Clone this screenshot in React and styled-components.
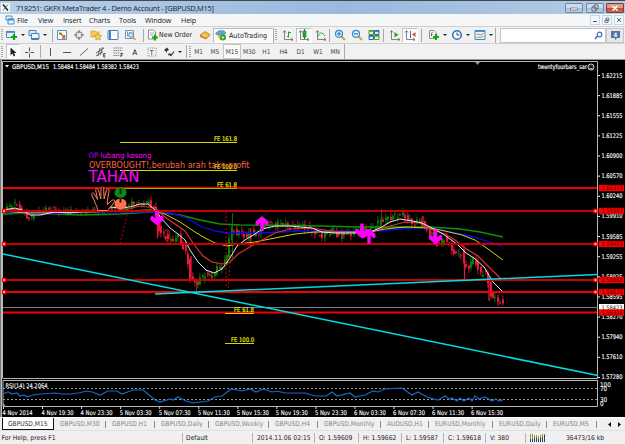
import React from 'react';
import styled, { createGlobalStyle } from 'styled-components';

const GlobalStyle = createGlobalStyle`
  * { box-sizing: border-box; }
  body {
    margin: 0;
    overflow: hidden;
    background: #f0f0f0;
    font-family: "DejaVu Sans Condensed", "DejaVu Sans", sans-serif;
    font-size: 6.7px;
    color: #222;
  }
`

const Window = styled.div`
  width: 625px;
  height: 444px;
  display: flex;
  flex-direction: column;
  background: #f0f0f0;
  white-space: nowrap;
  overflow: hidden;
`

const TitleBar = styled.header`
  height: 14px;
  flex: none;
  display: flex;
  align-items: center;
  border-top: 1px solid #45484f;
  background: linear-gradient(90deg, #b9cfe8 0, #a3c0e0 38%, #9ab9dc 55%, #b4cbe5 100%);
  font-family: "Open Sans", "Noto Sans", sans-serif;
  font-size: 7.5px;
  color: #1d2430;
`

const TitleText = styled.span`
  flex: 1;
  margin-left: 5px;
  letter-spacing: -0.28px;
`

const WindowButton = styled.span`
  width: 18px;
  height: 10px;
  margin-right: ${props => props.$gap}px;
  border: 1px solid ${props => props.$close ? '#7c3a35' : '#6e88a6'};
  border-radius: 1px;
  display: flex;
  align-items: center;
  justify-content: center;
  background: ${props => props.$close
    ? 'linear-gradient(#df9b8e 45%, #c04c36 50%, #cf6a50)'
    : 'linear-gradient(#cddcec 45%, #a5bed9 50%, #b9cfe5)'};
`

const MenuBar = styled.nav`
  height: 12px;
  flex: none;
  display: flex;
  align-items: center;
  padding-left: 3px;
  background: #f5f6f7;
  font-family: "Open Sans", "Noto Sans", sans-serif;
  font-size: 7.2px;
  letter-spacing: -0.15px;
`

const MenuItem = styled.span`
  width: ${props => props.$w}px;
`

const MdiButtons = styled.div`
  margin-left: auto;
  margin-right: 1px;
  display: flex;
  gap: 2px;
`

const MdiButton = styled.span`
  width: 10px;
  height: 10px;
  border: 1px solid #c3d6ea;
  background: #f2f7fc;
  display: flex;
  align-items: center;
  justify-content: center;
`

const Toolbar = styled.div`
  height: ${props => props.$h}px;
  flex: none;
  display: flex;
  align-items: center;
  padding-left: 1px;
  border-top: 1px solid #d0d0d0;
  background: #f1f1f1;
`

const Grip = styled.span`
  width: 2px;
  height: 12px;
  flex: none;
  margin-right: ${props => props.$gap}px;
  background: repeating-linear-gradient(#aaa 0 1px, #eee 1px 2px);
`

const Slot = styled.span`
  width: ${props => props.$w || 17}px;
  height: 15px;
  flex: none;
  display: flex;
  align-items: center;
  justify-content: center;
`

const Pressed = styled(Slot)`
  border: 1px solid #c2c2c2;
  border-right-color: #fff;
  border-bottom-color: #fff;
  background: #fafafa;
`

const Separator = styled.span`
  width: 1px;
  height: ${props => props.$h || 13}px;
  flex: none;
  margin: 0 ${props => props.$r || 0}px 0 ${props => props.$l || 0}px;
  background: #a9a9a9;
`

const Drop = styled.span`
  width: ${props => props.$w || 5}px;
  flex: none;
  display: flex;
  justify-content: center;
  &::after {
    content: '';
    border: 2px solid transparent;
    border-top-color: #222;
    border-bottom: 0;
  }
`

const ToolLabel = styled.span`
  width: ${props => props.$w}px;
  flex: none;
  font-size: 6.9px;
`

const AutoButton = styled.span`
  width: 60px;
  height: 15px;
  flex: none;
  display: flex;
  align-items: center;
  gap: 2px;
  padding-left: 1px;
  font-size: 7.1px;
  border: 1px solid #bbb;
  border-right-color: #fff;
  border-bottom-color: #fff;
  background: #fafafa;
`

const Search = styled.span`
  width: 106px;
  height: 15px;
  margin-left: auto;
  padding-right: 2px;
  display: flex;
  align-items: center;
  justify-content: flex-end;
  border: 1px solid #c5c5c5;
  background: #fff;
`

const ChatButton = styled.span`
  width: 18px;
  height: 15px;
  margin-right: 1px;
  display: flex;
  align-items: center;
  justify-content: center;
  border: 1px solid #c5c5c5;
  background: #e8e8e8;
`

const Period = styled.span`
  width: ${props => props.$w}px;
  height: 15px;
  flex: none;
  display: flex;
  align-items: center;
  justify-content: center;
  font-size: 6.5px;
  color: #444;
  border: 1px solid ${props => props.$on ? '#c6c6c6' : 'transparent'};
  background: ${props => props.$on ? '#fafafa' : 'none'};
`

const ChartArea = styled.main`
  height: 358px;
  flex: none;
  background: #000;
  svg { display: block; }
`

const TabBar = styled.div`
  height: 13px;
  flex: none;
  display: flex;
  align-items: center;
  background: #f0f0f0;
  border-top: 1px solid #fff;
  padding-left: 2px;
  font-size: 6.6px;
  color: #858585;
`

const Tab = styled.span`
  width: ${props => props.$w}px;
  height: 12px;
  flex: none;
  display: flex;
  align-items: center;
  padding-left: ${props => props.$on ? 5 : 6}px;
  position: relative;
  color: ${props => props.$on ? '#333' : 'inherit'};
  background: ${props => props.$on ? '#fff' : 'none'};
  border: ${props => props.$on ? '1px solid #111' : '0'};
  border-top: 0;
  &::after {
    content: '';
    display: ${props => props.$on ? 'none' : 'block'};
    position: absolute;
    right: 0;
    width: 1px;
    height: 7px;
    background: #888;
  }
`

const TabArrows = styled.span`
  margin-left: auto;
  margin-right: 3px;
  display: flex;
`

const StatusBar = styled.footer`
  flex: 1;
  display: flex;
  align-items: center;
  border-top: 1px solid #e1e1e1;
  background: #f0f0f0;
`

const Status = styled.span`
  width: ${props => props.$w}px;
  height: 10px;
  flex: none;
  display: flex;
  align-items: center;
  padding-left: ${props => props.$pad || 4}px;
  border-right: ${props => props.$noLine ? '0' : '1px solid #b5b5b5'};
`

const Svg = ({ w = 12, h = 12, children }) => (
  <svg width={w} height={h} viewBox={`0 0 ${w} ${h}`} fill="none">{children}</svg>
)

const Plus = ({ x, y }) => (
  <path d={`M${x} ${y - 3}v6M${x - 3} ${y}h6`} stroke="#13a81c" strokeWidth="2.2" />
)

const Axes = () => (
  <path d="M2.500 2v8.500h8M1 3.500l1.500-2 1.500 2M9 9l2 1.500L9 12" stroke="#666" strokeWidth=".8" />
)

const icons = {
  logo: <Svg w={9} h={9}><rect width="9" height="9" fill="#f4f6f8" /><path d="M2 1.500l5 6" stroke="#222" strokeWidth="1.500" /><path d="M7 1.500l-5 6" stroke="#444" strokeWidth=".8" /></Svg>,
  mdi: <Svg w={10} h={10}><path d="M1 1h6v4H1zM3 4h6v5H3z" fill="#e9f4fd" stroke="#4a8fc7" /><path d="M3 4.500h6" stroke="#4a8fc7" strokeWidth="1.500" /></Svg>,
  newChart: <Svg><path d="M.5 2.500h8v6h-8z" fill="#e4f1fb" stroke="#5b8bb4" /><path d="M.5 3h8" stroke="#3f86c4" strokeWidth="1.600" /><Plus x={8} y={8} /></Svg>,
  profiles: <Svg><path d="M1 1.500h7v5H1z" fill="#d9ebfa" stroke="#4686bd" /><path d="M3.500 4.500h7.500v5.500H3.500z" fill="#eaf4fc" stroke="#4686bd" /><path d="M3.500 10h7" stroke="#2869a5" strokeWidth="1.500" /></Svg>,
  market: <Svg><path d="M1.500 1.500h9v9h-9z" fill="#fff" stroke="#4e94c8" /><path d="M3 3.500h2.500v2H3z" fill="#25a932" /><path d="M4.500 4.500l4 4M8.500 6v3H6" stroke="#e75928" strokeWidth="1.500" /></Svg>,
  target: <Svg><circle cx="6" cy="6" r="3.300" stroke="#666" strokeWidth=".9" /><path d="M6 1v3.500M6 7.500V11M1 6h3.500M7.500 6H11" stroke="#666" strokeWidth=".9" /></Svg>,
  star: <Svg><path d="M1 2h4l1 1h3v5H1z" fill="#f3cc5b" stroke="#c49b31" strokeWidth=".7" /><path d="M8 4l1.200 2.300 2.500.3-1.800 1.800.4 2.600L8 9.800l-2.300 1.200.4-2.600-1.800-1.800 2.500-.3z" fill="#f7d44a" stroke="#b88a1a" strokeWidth=".6" /></Svg>,
  terminal: <Svg><rect x="1" y="1.500" width="10" height="9" rx="1" fill="#fff" stroke="#3f7cb8" /><path d="M2 2h2v8H2z" fill="#3f84c6" /><path d="M5.500 4h4M5.500 6h4" stroke="#ccdfef" strokeWidth=".6" /></Svg>,
  tester: <Svg><path d="M1.500 1.500h8v8h-8z" fill="#eef6fc" stroke="#7698b5" /><path d="M3.500 2.500v5M5.500 3v4" stroke="#5b85aa" strokeWidth=".8" /><circle cx="7" cy="6" r="2.300" fill="#d7edfb" stroke="#4a8ab8" /><path d="M9 8l2.500 3" stroke="#d4a43a" strokeWidth="1.600" /></Svg>,
  order: <Svg><path d="M1.500 1h5l2 2v7h-7z" fill="#fff" stroke="#777" strokeWidth=".8" /><path d="M3 4h4M3 6h3" stroke="#888" strokeWidth=".7" /><Plus x={8} y={8.500} /></Svg>,
  gold: <Svg><path d="M1 6l5-3.500L11 5.500 7.500 9.500z" fill="#f3bd3e" stroke="#a8741b" strokeWidth=".7" /><path d="M1 6v2l6 2.500 4-4V5.500L7.500 9z" fill="#cf8d22" /><path d="M3.500 5.500l4 1.800" stroke="#fbe6a5" /></Svg>,
  auto: <Svg><path d="M1 5h10l-3 6H5z" fill="#edbd38" /><path d="M.5 5C2 1 9 0 11 4c-3 2-7 2-10.500 1z" fill="#5da5d7" stroke="#3b7fae" strokeWidth=".6" /><circle cx="8" cy="8.500" r="3" fill="#25a930" /><path d="M7.200 7l2.300 1.500L7.200 10z" fill="#fff" /></Svg>,
  bars: <Svg><Axes /><path d="M6.500 2.500v6M6.500 7.500H5M6.500 3.500H9" stroke="#249a35" /></Svg>,
  candle: <Svg><Axes /><path d="M6.500 0v10" stroke="#16862a" /><rect x="5" y="2" width="3" height="6" fill="#24b139" stroke="#16862a" strokeWidth=".7" /></Svg>,
  line: <Svg><Axes /><path d="M3 7.500C5 2.500 7 3 10 7" stroke="#35a345" /></Svg>,
  zoomIn: <Svg><path d="M7.500 7.500l3.500 3.500" stroke="#d3a72f" strokeWidth="2.200" /><circle cx="5" cy="4.800" r="3.500" fill="#dff1fc" stroke="#348bc9" strokeWidth="1.200" /><path d="M3 4.800h4M5 2.800v4" stroke="#2f7fc0" strokeWidth="1.200" /></Svg>,
  zoomOut: <Svg><path d="M7.500 7.500l3.500 3.500" stroke="#d3a72f" strokeWidth="2.200" /><circle cx="5" cy="4.800" r="3.500" fill="#dff1fc" stroke="#348bc9" strokeWidth="1.200" /><path d="M3 4.800h4" stroke="#2f7fc0" strokeWidth="1.200" /></Svg>,
  tiles: <Svg><path d="M1 1.500h4.500v4H1zM6.500 6.500H11v4H6.500z" fill="#e4f3dc" stroke="#4a9c2d" /><path d="M6.500 1.500H11v4H6.500zM1 6.500h4.500v4H1z" fill="#dbe8fa" stroke="#2b67b5" /><path d="M1 2h4.500M6.500 7H11" stroke="#4a9c2d" strokeWidth="1.500" /><path d="M6.500 2H11M1 7h4.500" stroke="#2b67b5" strokeWidth="1.500" /></Svg>,
  scroll: <Svg><Axes /><path d="M5.500 3v5.500l4-2.700z" fill="#27a43a" /></Svg>,
  shift: <Svg><Axes /><path d="M6.500 2v7" stroke="#36729f" /><path d="M11.500 3L8 5.500 11.500 8z" fill="#c94e2d" /></Svg>,
  indicators: <Svg><path d="M1.500 1.500h4.500l2 2v6H1.500z" fill="#f6f6f6" stroke="#777" strokeWidth=".8" /><path d="M5 3.500c-1-.5-1.500 0-1.500 1v3M2.700 5.500h2" stroke="#555" strokeWidth=".7" /><Plus x={8} y={8} /></Svg>,
  clock: <Svg><circle cx="6" cy="6" r="4.300" fill="#f7fbff" stroke="#2b76c1" strokeWidth="1.600" /><path d="M6 3.500V6h2.500" stroke="#333" strokeWidth=".9" /></Svg>,
  template: <Svg><path d="M1 1.500h10v9H1z" fill="#edf5fc" stroke="#4d87b7" /><path d="M1 2h10" stroke="#3e87c5" strokeWidth="1.800" /><path d="M2.500 6l2-1 2 1 3-1.500" stroke="#c25336" strokeWidth=".8" /><path d="M2.500 9l2-1 2 .5 3-1" stroke="#2b9b40" strokeWidth=".8" /></Svg>,
  cursor: <Svg><path d="M3.500 1.500v8l2-2 1.200 3 1.500-.7L7 7h2.500z" fill="#222" /></Svg>,
  cross: <Svg><path d="M5.500 1.500v4M5.500 7.500v4M1 6.500h3.500M6.500 6.500H10" stroke="#555" /></Svg>,
  vline: <Svg><path d="M6.500 2v8" stroke="#555" /></Svg>,
  hline: <Svg><path d="M2 6.500h8" stroke="#555" /></Svg>,
  trend: <Svg><path d="M2 9.500l8-7" stroke="#555" strokeWidth=".9" /></Svg>,
  channel: <Svg><path d="M1 7l8-5M1 10l7-4.500M3 10l2-8M5.500 9l2-8" stroke="#444" strokeWidth=".8" /><path d="M10.500 7.500H8.700V11h1.800M8.700 9.200h1.500" stroke="#222" strokeWidth=".8" /></Svg>,
  fibo: <Svg><path d="M1.500 2h9M1.500 4.500h9M1.500 7h7M1.500 9.500h6" stroke="#666" strokeWidth=".8" strokeDasharray="1.500 .6" /><path d="M9 11V7.500h2M9 9.200h1.600" stroke="#222" strokeWidth=".8" /></Svg>,
  arrows: <Svg><path d="M1 4l3-2.500L6 4 4 5v2L2.500 5z" fill="#333" /><path d="M6 7.500l2 2 3-4M5 9l3-1" stroke="#333" strokeWidth="1.200" /></Svg>,
}

const MA = {
  green: '3,214 30,213 80,215 120,214 150,212 165,213 180,215 200,220 220,224 240,225 300,225.5 360,227 400,227 430,227 460,229 480,232 503,237',
  blue: '3,212 40,214 90,212 150,212 170,213 185,217 200,226 215,231 228,233 260,233 300,231 380,231 410,228 430,228 450,232 470,236 490,242 503,247',
  yellow: '3,211 25,213 90,212 150,210 165,214 180,222 195,232 205,238 215,243 227,246 237,244 255,242 275,238 295,234 315,232 345,232 370,232 385,229 405,227 430,228 445,231 462,235 475,240 488,249 503,260',
  red: '3,210 15,209 28,212 60,212 100,211 125,210 140,206 155,208 165,217 175,224 185,231 193,243 203,256 212,262 222,264 230,262 238,254 250,247 262,240 275,233 290,229 310,228 340,232 370,232 390,226 405,222 420,223 430,229 445,234 455,240 465,248 478,256 490,268 498,276 503,281',
  white: '3,210 15,208 22,210 30,215 40,215 55,212 70,213 85,211 100,211 110,207 120,208 130,207 140,204 148,204 155,210 162,219 170,228 178,234 185,240 190,250 198,262 206,270 214,273 222,269 230,258 237,246 245,240 255,234 262,229 275,226 290,226 300,227 312,228 322,232 335,233 355,233 370,232 380,228 390,222 400,219 412,221 422,223 430,227 443,234 450,239 458,245 466,253 474,258 484,267 493,282 503,292',
}

// mid price along the chart, bars are interpolated between these
const pricePath = [
  [4, 211], [10, 206], [15, 203], [20, 208], [25, 214], [30, 219], [36, 213], [45, 210], [52, 208], [60, 212],
  [70, 210], [80, 213], [90, 210], [98, 212], [105, 209], [115, 207], [124, 210], [132, 203], [142, 204], [150, 202],
  [156, 212], [160, 233], [166, 236], [172, 242], [178, 235], [182, 244], [187, 255], [191, 279], [197, 284],
  [201, 278], [206, 274], [212, 277], [218, 268], [223, 266], [227, 258], [231, 229], [237, 233], [243, 232],
  [247, 239], [251, 231], [256, 236], [261, 229], [267, 223], [275, 226], [281, 223], [290, 227], [300, 225],
  [310, 229], [317, 234], [323, 236], [328, 233], [334, 229], [339, 237], [344, 233], [352, 234], [360, 229],
  [369, 231], [376, 225], [382, 220], [389, 218], [396, 216], [402, 214], [408, 219], [414, 224], [421, 220],
  [427, 231], [433, 234], [438, 245], [445, 238], [451, 248], [457, 256], [461, 250], [465, 268], [470, 266],
  [475, 257], [480, 275], [486, 271], [490, 293], [495, 299], [500, 301], [503, 305],
]

const midAt = x => {
  for (let i = 1; i < pricePath.length; i++) {
    const [x1, y1] = pricePath[i]
    const [x0, y0] = pricePath[i - 1]
    if (x <= x1) return y0 + (y1 - y0) * (x - x0) / (x1 - x0)
  }
  return 306
}

const candles = []
for (let i = 0; i < 205; i++) {
  const x = 4 + i * 2.440
  const late = x > 150
  const open = midAt(x - 1.500) + Math.sin(i * 2.7) * (late ? 2.200 : 1.500)
  const close = midAt(x + 1.500) + Math.sin(i * 4.3 + 1) * (late ? 2.500 : 1.800)
  const range = late ? 4.500 : 3.500
  candles.push({
    x: Math.round(x),
    open,
    close,
    high: Math.min(open, close) - Math.abs(Math.sin(i * 1.9)) * range,
    low: Math.max(open, close) + Math.abs(Math.cos(i * 2.3)) * range,
  })
}

const scale = [
  '1.62215', '1.61885', '1.61555', '1.61225', '1.60900', '1.60570', '1.60240', '1.59910',
  '1.59585', '1.59255', '1.58925', '1.58595', '1.58270', '1.57940', '1.57610', '1.57280',
]

const levels = [
  { y: 188, label: '1.60373' },
  { y: 211, label: '1.59993', handle: true },
  { y: 244, label: '1.59453', handle: true },
  { y: 280, label: '1.58868', handle: true },
  { y: 292, label: '1.58674', handle: true },
  { y: 312.5, label: '1.58338' },
]

const times = [
  '4 Nov 2014', '4 Nov 19:30', '4 Nov 23:30', '5 Nov 03:30', '5 Nov 07:30', '5 Nov 11:30', '5 Nov 15:30',
  '5 Nov 19:30', '5 Nov 23:30', '6 Nov 03:30', '6 Nov 07:30', '6 Nov 11:30', '6 Nov 15:30',
]

const fibs = [
  { x: 120, y: 142, label: 'FE 161.8' },
  { x: 120, y: 170, label: 'FE 100.0' },
  { x: 120, y: 188, label: 'FE 61.8' },
  { x: 225, y: 313, label: 'FE 61.8' },
  { x: 225, y: 343, label: 'FE 100.0' },
]

const rsi = '3,394 8,392 12,394 17,393 20,396 24,395 27,397 33,395 40,394 55,393 62,394 70,394 78,393 87,391 92,392 100,395 108,391 117,391 122,394 133,390 143,390 148,394 155,400 160,402 170,399 173,400 178,397 186,401 193,403 200,402 208,401 215,397 222,396 231,389 242,391 250,389 256,392 263,389 272,392 277,391 285,393 305,393 315,396 326,396 332,392 337,396 350,393 355,397 365,395 373,391 378,392 385,389 402,388 412,395 418,392 427,397 438,400 445,396 449,399 452,398 457,401 460,398 464,401 469,398 472,401 475,396 479,399 485,397 492,401 496,399 499,401 503,400'

function Arrow({ x, y, up }) {
  return (
    <path
      transform={`translate(${x} ${y}) scale(1 ${up ? -1 : 1})`}
      d="M-1.700-7.500h3.400V.5L5-2.500 6.500-1V2L0 7.500-6.500 2V-1L-5-2.500-1.700.5z"
      fill="#f0f"
    />
  )
}

function Chart() {
  return (
    <svg width="625" height="358" viewBox="0 59 625 358" fontFamily='"DejaVu Sans Condensed", sans-serif' fontSize="6.3">
      <rect x="0" y="59" width="625" height="358" fill="#000" />
      <rect x="0" y="59" width="625" height="1" fill="#999" />
      <rect x="0" y="60" width="1" height="357" fill="#777" />
      <rect x="1" y="60" width="1" height="357" fill="#bbb" />
      <path d="M2.500 378.500V61.500H597.500V378.500M3 378.500H598M3 380.500H598M597.500 380.500V406.500H3V380.500" fill="none" stroke="#b8b8b8" />
      <path d="M475 62h5l-2.500 3z" fill="#8798aa" />

      {/* scale */}
      {scale.map((t, i) => (
        <g key={t} fill="#f5f5f5">
          <rect x="598" y={75 + i * 20.130} width="2" height="1" />
          <text x="601.500" y={77.500 + i * 20.130} textLength="21" lengthAdjust="spacingAndGlyphs" stroke="#fff" strokeWidth=".15">{t}</text>
        </g>
      ))}

      {/* bars and moving averages */}
      <g>
        {candles.map((c, i) => {
          const color = c.close < c.open ? '#008a00' : '#f01842'
          return (
            <g key={i} fill={color}>
              <rect x={c.x + .5} y={c.high} width=".8" height={c.low - c.high} />
              <rect x={c.x} y={Math.min(c.open, c.close)} width="1.900" height={Math.max(.8, Math.abs(c.open - c.close))} />
            </g>
          )
        })}
        <path d="M232.500 213v45M381.500 209v14M196.500 280v13" stroke="#007000" />
        <path d="M157.500 216v22M191 256v25M250.500 228v18M423 216v12M464.500 251v29M489 277v24" stroke="#e0183c" strokeWidth="1.300" />
      </g>
      <g fill="none" strokeWidth="1">
        <polyline points={MA.green} stroke="#0a920a" strokeWidth="1.300" />
        <polyline points={MA.blue} stroke="#0909ef" strokeWidth="1.300" />
        <polyline points={MA.yellow} stroke="#d2d210" />
        <polyline points={MA.red} stroke="#e2302c" strokeWidth="1.200" />
        <polyline points={MA.white} stroke="#e8e8e8" />
      </g>
      <path d="M130 203L120 244M226 212v75M231 250l-3 42" stroke="#c00014" strokeDasharray="2 2" fill="none" />
      <ellipse cx="167" cy="235" rx="3" ry="5.500" fill="none" stroke="#b01808" />

      {/* levels */}
      <path d="M3 307.500H598" stroke="#777f88" />
      {levels.map(l => (
        <g key={l.label}>
          <rect x="3" y={l.y - 1} width="594" height="2" fill={l.y === 211 || l.y === 244 || l.y === 280 ? '#c90000' : '#f20000'} />
          {l.handle && <path d={`M2.500 ${l.y - 1.500}h3v3h-3zM594 ${l.y - 1.500}h3v3h-3z`} fill="#fff" stroke="#f00" strokeWidth="1.300" />}
        </g>
      ))}
      <path d="M3 254L598 375.500M155 294L598 274.500" stroke="#00dce4" strokeWidth="1.500" />
      <rect x="599" y="304" width="25" height="6.500" fill="#fff" />
      <text x="601.500" y="309.500" textLength="21" lengthAdjust="spacingAndGlyphs" fill="#111">1.58423</text>
      {levels.map(l => (
        <g key={l.label}>
          <rect x="599" y={l.y - 3.200} width="25" height="6.400" fill="#fa0000" />
          <text x="601.500" y={l.y + 2.300} textLength="21" lengthAdjust="spacingAndGlyphs" fill="#500">{l.label}</text>
        </g>
      ))}

      {/* fibo expansions */}
      {fibs.map((f, i) => (
        <g key={i}>
          <rect x={f.x} y={f.y} width={f.x === 120 ? 117 : 29} height="1" fill={f.y === 188 ? '#98b000' : '#d9d900'} />
          <text
            x={f.x === 120 ? 237 : 254}
            y={f.y - 1.200}
            textAnchor="end"
            textLength={f.label.length === 8 ? 23 : 20}
            lengthAdjust="spacingAndGlyphs"
            fill="#f4f400"
            stroke="#f4f400"
            strokeWidth=".15"
          >
            {f.label}
          </text>
        </g>
      ))}

      {/* signals */}
      <text x="88.500" y="158.300" fontSize="7.500" fill="#f0f" textLength="63" lengthAdjust="spacingAndGlyphs">
        <tspan fill="#b000ff">OP</tspan> lubang kosong
      </text>
      <text x="89" y="168.300" fontSize="8.800" fill="#ff6545" textLength="160.500" lengthAdjust="spacingAndGlyphs">OVERBOUGHT!,berubah arah take profit</text>
      <text x="88.500" y="182" fontSize="15.800" fill="#f0f" textLength="51" lengthAdjust="spacingAndGlyphs">TAHAN</text>
      <path
        d="M97.500 210.500c0-4-2-6-2.700-8.500L91.800 195c-.6-2 1.600-2.800 2.500-1l3.400 5.500-2-9c-.3-2 2.200-2.500 2.800-.5l2.300 9 .2-10.500c0-2 2.700-2 2.700 0l.4 10.500 2.400-9c.6-1.900 3-1.200 2.600.7L107.500 200l-.3 4.500 4.800-4.200c1.700-1.200 3.600.2 2.400 1.800l-6.900 8.400z"
        fill="#000"
        stroke="#ff8062"
        strokeWidth="1"
      />
      <ellipse cx="120.500" cy="192.500" rx="6" ry="5.300" fill="#078b12" />
      <ellipse cx="120.500" cy="204" rx="6" ry="5.500" fill="#ff704d" />
      <path d="M120.500 189v5M120.500 198.500v4" stroke="#111" strokeWidth="1.800" />
      <Arrow x={157} y={218} />
      <Arrow x={262} y={223.500} up />
      <Arrow x={362} y={231} />
      <Arrow x={369} y={236} up />
      <Arrow x={435.500} y={237} />

      {/* headings */}
      <path d="M5 65h4l-2 2.500z" fill="#fff" />
      <g fill="#fff" stroke="#fff" strokeWidth=".15">
        <text x="12" y="68.500" textLength="37" lengthAdjust="spacingAndGlyphs">GBPUSD,M15</text>
        <text x="53" y="68.500" textLength="86" lengthAdjust="spacingAndGlyphs">1.58484 1.58484 1.58382 1.58423</text>
        <text x="538" y="69" textLength="49" lengthAdjust="spacingAndGlyphs">twentyfourbars_sar</text>
      </g>
      <g fill="none" stroke="#fff" strokeWidth=".8">
        <circle cx="591" cy="67" r="3" />
        <path d="M589.300 68q1.700 2 3.400 0M589.500 66h.8M591.700 66h.8" />
      </g>

      {/* rsi */}
      <path d="M3 388.500H597M3 399.500H597" stroke="#999" strokeDasharray="2 2" />
      <polyline points={rsi} fill="none" stroke="#1769c6" strokeWidth="1.200" />
      <path d="M3 403v3.500h3z" fill="#9aa8b5" />
      <g fill="#fff" stroke="#fff" strokeWidth=".1">
        <text x="5.500" y="388" textLength="42" lengthAdjust="spacingAndGlyphs">RSI(14) 24.2064</text>
        <text x="600" y="387">100</text>
        <text x="600" y="391">70</text>
        <text x="600" y="401.500">30</text>
        <text x="600" y="405.500">0</text>
        {times.map((t, i) => (
          <text key={t} x={2.500 + i * 39.050} y="414.800" textLength={i ? 32 : 30} lengthAdjust="spacingAndGlyphs">{t}</text>
        ))}
      </g>
      {times.map((t, i) => <rect key={t} x={3 + i * 39.050} y="407" width="1" height="2" fill="#ddd" />)}
    </svg>
  )
}

const menus = [['File', 21], ['View', 25], ['Insert', 26], ['Charts', 30], ['Tools', 26], ['Window', 36], ['Help', 20]]
const tabs = [
  ['GBPUSD,M15', 52], ['GBPUSD,M30', 52], ['GBPUSD,H1', 49], ['GBPUSD,Daily', 54], ['GBPUSD,Weekly', 60],
  ['GBPUSD,H4', 49], ['GBPUSD,Monthly', 63], ['AUDUSD,H1', 48], ['EURUSD,Monthly', 64], ['EURUSD,Daily', 54], ['EURUSD,M5', 50],
]

export default function App() {
  return (
    <>
      <GlobalStyle />
      <Window>
        <TitleBar>
          <Slot $w={11}>{icons.logo}</Slot>
          <TitleText>718251: GKFX MetaTrader 4 - Demo Account - [GBPUSD,M15]</TitleText>
          <WindowButton $gap={3}><Svg w={8} h={6}><rect x=".5" y="3" width="7" height="2" fill="#fff" stroke="#555" strokeWidth=".6" /></Svg></WindowButton>
          <WindowButton $gap={2}><Svg w={8} h={8}><path d="M3 1h4v4H3zM1 3h4v4H1z" fill="#e7eef5" stroke="#4c5865" strokeWidth=".9" /></Svg></WindowButton>
          <WindowButton $close $gap={1}><Svg w={8} h={8}><path d="M1.500 2l5 4.500M6.500 2l-5 4.500" stroke="#fff" strokeWidth="1.600" /></Svg></WindowButton>
        </TitleBar>

        <MenuBar>
          <Slot $w={14}>{icons.mdi}</Slot>
          {menus.map(([name, w]) => <MenuItem key={name} $w={w}>{name}</MenuItem>)}
          <MdiButtons>
            <MdiButton><Svg w={6} h={6}><path d="M1 4.500h4" stroke="#456" /></Svg></MdiButton>
            <MdiButton><Svg w={6} h={6}><path d="M2 1h3v2.500H2zM1 3h3v2.500H1z" stroke="#456" strokeWidth=".7" /></Svg></MdiButton>
            <MdiButton><Svg w={6} h={6}><path d="M1 1l4 4M5 1L1 5" stroke="#456" strokeWidth=".9" /></Svg></MdiButton>
          </MdiButtons>
        </MenuBar>

        <Toolbar $h={17}>
          <Grip $gap={2} />
          <Slot $w={14}>{icons.newChart}</Slot><Drop $w={7} />
          <Slot $w={16}>{icons.profiles}</Slot><Drop $w={5} />
          <Separator $l={5} />
          <Slot>{icons.market}</Slot>
          <Slot>{icons.target}</Slot>
          <Slot>{icons.star}</Slot>
          <Slot>{icons.terminal}</Slot>
          <Slot>{icons.tester}</Slot>
          <Separator $l={5} $r={2} />
          <Slot $w={13}>{icons.order}</Slot>
          <ToolLabel $w={37}>New Order</ToolLabel>
          <Slot $w={17}>{icons.gold}</Slot>
          <AutoButton>{icons.auto}<span>AutoTrading</span></AutoButton>
          <Separator $r={1} $h={15} />
          <Grip $gap={2} />
          <Slot>{icons.bars}</Slot>
          <Pressed $w={16}>{icons.candle}</Pressed>
          <Slot>{icons.line}</Slot>
          <Separator $r={1} />
          <Slot>{icons.zoomIn}</Slot>
          <Slot>{icons.zoomOut}</Slot>
          <Slot>{icons.tiles}</Slot>
          <Separator $l={1} $r={3} />
          <Slot $w={15}>{icons.scroll}</Slot>
          <Pressed $w={16}>{icons.shift}</Pressed>
          <Separator $l={3} $r={5} />
          <Slot $w={14}>{icons.indicators}</Slot><Drop $w={7} />
          <Slot $w={17}>{icons.clock}</Slot><Drop $w={6} />
          <Slot $w={17}>{icons.template}</Slot><Drop $w={6} />
          <Separator $l={1} $h={15} />
          <Search>
            <Svg w={9} h={9}><circle cx="5.500" cy="3.500" r="2.300" stroke="#3971c4" strokeWidth="1.200" /><path d="M3.500 5L1 8" stroke="#3971c4" strokeWidth="1.600" /></Svg>
          </Search>
          <ChatButton>
            <Svg w={11} h={11}><path d="M1 1h9v7H7l-2 2.500V8H1z" fill="#5573a5" /><text x="3.500" y="6.800" fontSize="6" fontWeight="bold" fill="#fff">4</text></Svg>
          </ChatButton>
        </Toolbar>

        <Toolbar $h={16}>
          <Grip $gap={3} />
          <Pressed $w={14}>{icons.cursor}</Pressed>
          <Slot $w={19}>{icons.cross}</Slot>
          <Separator $l={1} />
          <Slot>{icons.vline}</Slot>
          <Slot>{icons.hline}</Slot>
          <Slot>{icons.trend}</Slot>
          <Slot>{icons.channel}</Slot>
          <Slot>{icons.fibo}</Slot>
          <Slot><Svg><text x="3.500" y="8.800" fontSize="7.500" fill="#333" stroke="#333" strokeWidth=".2">A</text></Svg></Slot>
          <Slot $w={18}><Svg><rect x="2" y="2" width="8" height="8" stroke="#777" strokeDasharray="1 1" strokeWidth=".8" /><text x="3.800" y="8.700" fontSize="7" fill="#333">T</text></Svg></Slot>
          <Slot $w={16}>{icons.arrows}</Slot>
          <Drop $w={5} />
          <Separator $l={4} $r={2} />
          <Grip $gap={0} />
          {['M1', 'M5', 'M15', 'M30', 'H1', 'H4', 'D1', 'W1', 'MN'].map(p => (
            <Period key={p} $on={p === 'M15'} $w={p === 'M1' ? 15.2 : 17.2}>{p}</Period>
          ))}
          <Separator $h={15} />
        </Toolbar>

        <ChartArea><Chart /></ChartArea>

        <TabBar>
          {tabs.map(([name, w], i) => <Tab key={name} $w={w} $on={i === 0}>{name}</Tab>)}
          <TabArrows>
            <Svg w={15} h={7}><path d="M4 1v5L1 3.500zM11 1v5l3-2.500z" fill="#111" /></Svg>
          </TabArrows>
        </TabBar>

        <StatusBar>
          <Status $w={183} $pad={1.500}>For Help, press F1</Status>
          <Status $w={70} $pad={3}>Default</Status>
          <Status $w={62}>2014.11.06 02:15</Status>
          <Status $w={44}>O: 1.59609</Status>
          <Status $w={43}>H: 1.59662</Status>
          <Status $w={42}>L: 1.59587</Status>
          <Status $w={42}>C: 1.59618</Status>
          <Status $w={40}>V: 380</Status>
          <Status $w={38} $noLine>
            <Svg w={15} h={8}>
              <path d="M.5 0v7M2.500 0v7M4.500 1v6M6.500 1v6M8.500 2v5M10.500 1v6M12.500 0v7M14.500 0v7" stroke="#8b9b2b" />
              <path d="M.5 5v3M2.500 5v3M4.500 4v4M6.500 4v4M8.500 5v3M10.500 4v4M12.500 3v5M14.500 1v7" stroke="#23455b" />
            </Svg>
          </Status>
          <Status $w={60} $pad={2} $noLine>36473/16 kb</Status>
        </StatusBar>
      </Window>
    </>
  )
}
